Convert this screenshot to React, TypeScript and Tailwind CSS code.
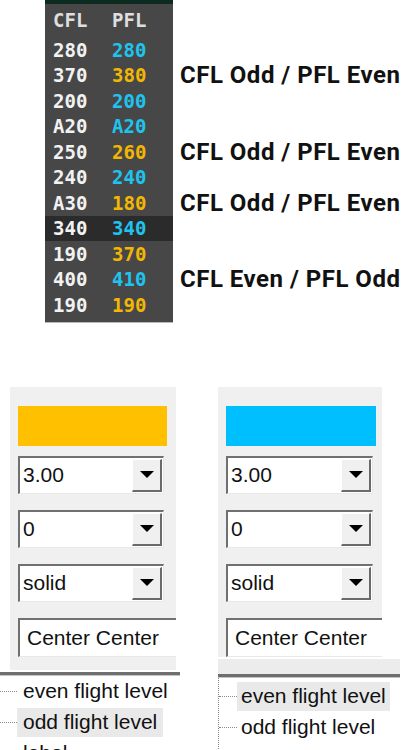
import React from "react";

type Tone = "c" | "a";

const rows: { cfl: string; pfl: string; tone: Tone; label?: string; hl?: boolean }[] = [
  { cfl: "280", pfl: "280", tone: "c" },
  { cfl: "370", pfl: "380", tone: "a", label: "CFL Odd / PFL Even" },
  { cfl: "200", pfl: "200", tone: "c" },
  { cfl: "A20", pfl: "A20", tone: "c" },
  { cfl: "250", pfl: "260", tone: "a", label: "CFL Odd / PFL Even" },
  { cfl: "240", pfl: "240", tone: "c" },
  { cfl: "A30", pfl: "180", tone: "a", label: "CFL Odd / PFL Even" },
  { cfl: "340", pfl: "340", tone: "c", hl: true },
  { cfl: "190", pfl: "370", tone: "a" },
  { cfl: "400", pfl: "410", tone: "c", label: "CFL Even / PFL Odd" },
  { cfl: "190", pfl: "190", tone: "a" },
];

const mono = "font-['DejaVu_Sans_Mono',monospace] font-bold text-[19px]";
const ui = "font-['Liberation_Sans',Arial,sans-serif] text-[21px] text-[#111]";

function Arrow() {
  return (
    <svg width="14" height="7" viewBox="0 0 14 7">
      <path d="M0 0H14L7 7Z" fill="#000" />
    </svg>
  );
}

function Combo({ value, width }: { value: string; width: string }) {
  return (
    <div
      className={`mt-[16px] flex h-[38px] ${width} items-stretch border-t-2 border-l-2 border-b border-r border-t-[#707070] border-l-[#707070] border-b-[#e8e8e8] border-r-[#e8e8e8] bg-white`}
    >
      <div className={`flex flex-1 items-center pl-[3px] ${ui}`}>{value}</div>
      <div className="my-[1px] mr-[1px] flex w-[30px] items-center justify-center border-t border-l border-b-2 border-r-2 border-t-white border-l-white border-b-[#6a6a6a] border-r-[#6a6a6a] bg-[#f0f0f0]">
        <Arrow />
      </div>
    </div>
  );
}

function Field() {
  return (
    <div
      className={`mt-[16px] flex h-[39px] items-center border-t-2 border-l-2 border-b border-t-[#707070] border-l-[#707070] border-b-[#e8e8e8] bg-white pl-[7px] ${ui} whitespace-nowrap overflow-hidden`}
    >
      Center Center
    </div>
  );
}

function Panel({ color, swatchW, comboW, panelW }: { color: string; swatchW: string; comboW: string; panelW: string }) {
  return (
    <div className={`${panelW} bg-[#f0f0f0] pl-[8px] pt-[19px]`}>
      <div className={`h-[40px] ${swatchW} ${color}`} />
      <div className="h-[-6px]" />
      <div className="-mt-[6px]">
        <Combo value="3.00" width={comboW} />
        <Combo value="0" width={comboW} />
        <Combo value="solid" width={comboW} />
        <Field />
      </div>
    </div>
  );
}

function TreeRow({ text, hl, dots, pad }: { text: string; hl?: boolean; dots: string; pad: string }) {
  return (
    <div className="flex h-[31px] items-center">
      <div className={`${dots} border-t border-dotted border-[#8a8a8a]`} />
      <span className={`flex h-[29px] items-center ${pad} ${ui} ${hl ? "bg-[#e9e9e9]" : ""}`}>{text}</span>
    </div>
  );
}

export default function App() {
  return (
    <div className="h-[750px] w-[420px] overflow-hidden bg-white">
      {/* strip chart */}
      <div className="ml-[45px] flex flex-col">
        <div className="h-[4px] w-[128px] bg-[#0c2a20]" />
        <div className={`flex h-[33px] w-[128px] items-center bg-[#474747] pl-2 text-[#dedede] ${mono}`}>
          <span className="w-[59px]">CFL</span>
          <span>PFL</span>
        </div>
        {rows.map((r, i) => (
          <div key={i} className="flex h-[25.5px] items-center">
            <div
              className={`flex h-full w-[128px] items-center pl-2 ${mono} ${r.hl ? "bg-[#2b2b2b]" : "bg-[#474747]"}`}
            >
              <span className="w-[59px] text-[#f2f2f2]">{r.cfl}</span>
              <span className={r.tone === "c" ? "text-[#1ec4ee]" : "text-[#f2b705]"}>{r.pfl}</span>
            </div>
            {r.label && (
              <span className="ml-[7px] whitespace-nowrap font-['Roboto',sans-serif] text-[24px] font-bold tracking-[0.5px] text-[#111]">
                {r.label}
              </span>
            )}
          </div>
        ))}
        <div className="h-[5px] w-[128px] border-b border-[#b8b8b8] bg-[#474747]" />
      </div>

      {/* style panels */}
      <div className="mt-[64px] flex gap-[38px]">
        <div className="w-[180px]">
          <div className="ml-[10px] w-[166px] bg-[#f0f0f0] pb-[13px]">
            <Panel color="bg-[#ffc000]" swatchW="w-[149px]" comboW="w-[146px]" panelW="w-[166px]" />
          </div>
          <div className="mt-[2px] h-[4px] border-t-[3px] border-b border-t-[#6e6e6e] border-b-[#c4c4c4]" />
          <TreeRow text="even flight level" dots="w-[17px]" pad="px-[6px]" />
          <TreeRow text="odd flight level" hl dots="w-[17px]" pad="px-[6px]" />
          <TreeRow text="label" dots="w-[17px]" pad="px-[6px]" />
        </div>
        <div className="w-[182px]">
          <Panel color="bg-[#00bfff]" swatchW="w-[150px]" comboW="w-[147px]" panelW="w-[164px]" />
          <div className="mt-[2px] h-[15px] bg-[#ececec]" />
          <div className="h-[4px] border-t-[3px] border-b border-t-[#6e6e6e] border-b-[#c4c4c4]" />
          <div className="border-l border-dotted border-[#8a8a8a] pt-[3px]">
            <TreeRow text="even flight level" hl dots="w-[18px]" pad="px-[4px]" />
            <TreeRow text="odd flight level" dots="w-[18px]" pad="px-[4px]" />
            <div className="h-[40px]" />
          </div>
        </div>
      </div>
    </div>
  );
}
